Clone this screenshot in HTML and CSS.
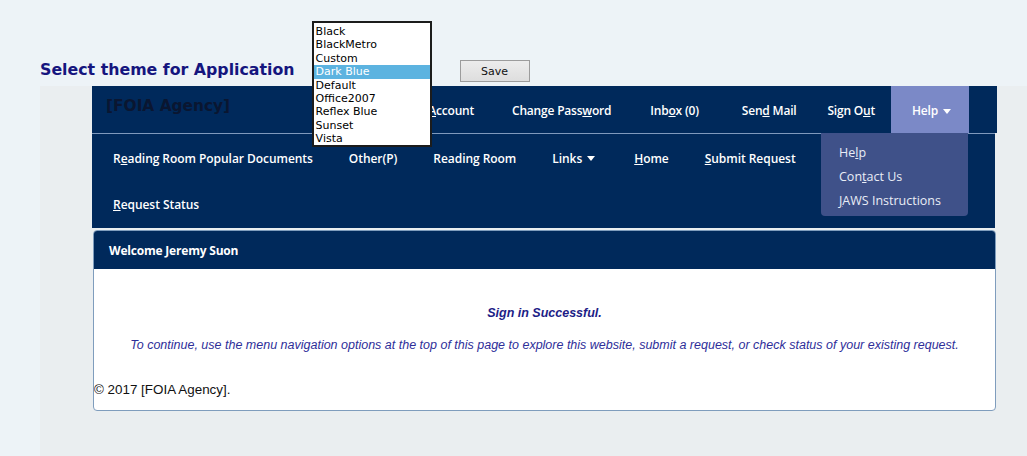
FILE: index.html
```html
<!DOCTYPE html>
<html lang="en">
<head>
<meta charset="utf-8">
<title>[FOIA Agency] - Home</title>
<link rel="stylesheet" href="styles.css">
</head>
<body>
  <div class="theme-bar">
    <h2 class="theme-title">Select theme for Application</h2>
    <div class="theme-picker">
      <ul class="theme-list" role="listbox" aria-label="Theme">
        <li>Black</li>
        <li>BlackMetro</li>
        <li>Custom</li>
        <li class="selected">Dark Blue</li>
        <li>Default</li>
        <li>Office2007</li>
        <li>Reflex Blue</li>
        <li>Sunset</li>
        <li>Vista</li>
      </ul>
    </div>
    <button class="save-btn" type="button">Save</button>
  </div>

  <div class="page">
    <div class="top-nav">
      <div class="brand">[FOIA Agency]</div>
      <ul class="top-links">
        <li><a href="#"><span>My <u>A</u>ccount</span></a></li>
        <li><a href="#"><span>Change Pass<u>w</u>ord</span></a></li>
        <li class="inbox"><a href="#"><span>Inb<u>o</u>x (0)</span></a></li>
        <li class="sendmail"><a href="#"><span>Sen<u>d</u> Mail</span></a></li>
        <li class="signout"><a href="#"><span>Sign O<u>u</u>t</span></a></li>
        <li class="help">
          <a href="#"><span>Help</span><svg class="caret" viewBox="0 0 8 5" width="8" height="5"><path d="M0 0h8L4 5z" fill="#fff"/></svg></a>
          <ul class="help-menu">
            <li><a href="#">He<u>l</u>p</a></li>
            <li><a href="#">Con<u>t</u>act Us</a></li>
            <li><a href="#"><u>J</u>AWS Instructions</a></li>
          </ul>
        </li>
      </ul>
    </div>

    <div class="main-nav">
      <ul class="main-links">
        <li><a href="#"><span>R<u>e</u>ading Room Popular Documents</span></a></li>
        <li><a href="#"><span>Other(P)</span></a></li>
        <li><a href="#"><span>Reading Room</span></a></li>
        <li class="links"><a href="#"><span>Links</span><svg class="caret" viewBox="0 0 8 5" width="8" height="5"><path d="M0 0h8L4 5z" fill="#fff"/></svg></a></li>
        <li><a href="#"><span><u>H</u>ome</span></a></li>
        <li><a href="#"><span><u>S</u>ubmit Request</span></a></li>
        <li><a href="#"><span><u>R</u>equest Status</span></a></li>
      </ul>
    </div>

    <div class="panel">
      <div class="panel-head">Welcome Jeremy Suon</div>
      <div class="panel-body">
        <p class="msg-title">Sign in Successful.</p>
        <p class="msg-text">To continue, use the menu navigation options at the top of this page to explore this website, submit a request, or check status of your existing request.</p>
        <p class="copyright">© 2017 [FOIA Agency].</p>
      </div>
    </div>
  </div>
</body>
</html>
```

FILE: styles.css
```css
* { box-sizing: border-box; }

html, body {
  margin: 0;
  padding: 0;
}

body {
  background: #edf3f7;
  font-family: "Open Sans", "Noto Sans", sans-serif;
  height: 456px;
  overflow: hidden;
}

ul { list-style: none; margin: 0; padding: 0; }
a { color: inherit; text-decoration: none; }

/* ---------- theme selector strip ---------- */
.theme-bar {
  height: 86px;
  display: flex;
  align-items: flex-end;
  padding-left: 40px;
}

.theme-title {
  margin: 0 17px 7px 0;
  font-family: "DejaVu Sans", Verdana, sans-serif;
  font-weight: bold;
  font-size: 15.8px;
  color: #15157e;
  white-space: nowrap;
}

.theme-picker {
  position: relative;
  width: 119px;
  align-self: stretch;
}

.theme-list {
  position: absolute;
  left: 0;
  top: 21px;
  width: 120px;
  height: 126px;
  padding: 2px 0 0 0;
  background: #fff;
  border: 2px solid #1c1c1c;
  font-family: "DejaVu Sans", Verdana, sans-serif;
  font-size: 11px;
  line-height: 13.4px;
  color: #000;
  z-index: 5;
}

.theme-list li {
  padding-left: 2px;
  white-space: nowrap;
}

.theme-list li.selected {
  background: #5cb3e0;
  color: #fff;
}

.save-btn {
  margin: 0 0 4px 29px;
  width: 70px;
  height: 22px;
  padding: 0;
  font-family: "DejaVu Sans", Verdana, sans-serif;
  font-size: 11px;
  color: #111;
  background: linear-gradient(#ececec, #dedede);
  border: 1px solid #9c9c9c;
  border-radius: 0;
}

/* ---------- page body ---------- */
.page {
  margin-left: 40px;
  background: #eaeef0;
  padding: 0 30px 0 52px;
  height: 370px;
}

.top-nav {
  height: 47px;
  background: #00295b;
  display: flex;
  align-items: stretch;
}

.brand {
  padding: 11px 0 0 14px;
  font-family: "DejaVu Sans", Verdana, sans-serif;
  font-weight: bold;
  font-size: 15.4px;
  color: #0a1631;
  white-space: nowrap;
}

.top-links {
  margin-left: auto;
  padding-right: 28px;
  display: flex;
  align-items: stretch;
}

.top-links > li {
  position: relative;
  display: flex;
}

.top-links > li > a {
  display: flex;
  align-items: center;
  padding: 2px 19px 0;
  font-size: 12px;
  font-weight: 600;
  color: #fff;
  letter-spacing: -0.2px;
  white-space: nowrap;
}

.top-links > li.inbox > a { padding: 2px 19px 0 20px; }
.top-links > li.sendmail > a { padding: 2px 12px 0 24px; }
.top-links > li.signout > a { padding: 2px 16px 0 19px; }

.top-links > li.help > a {
  background: #7b89c7;
  padding: 2px 18px 0 21px;
}

.caret {
  margin-left: 5px;
  margin-top: 1px;
}

.help-menu {
  position: absolute;
  top: 100%;
  right: 1px;
  width: 147px;
  padding: 8px 0 3px;
  background: #3f5189;
  border-radius: 0 0 4px 4px;
  z-index: 4;
}

.help-menu a {
  display: block;
  padding-left: 18px;
  line-height: 24px;
  font-size: 12.5px;
  color: #e9edf6;
  white-space: nowrap;
}

.main-nav {
  background: #00295b;
  border-top: 1px solid #7f99bd;
  padding: 1px 150px 1px 3px;
  margin-right: 2px;
}

.main-links {
  display: flex;
  flex-wrap: wrap;
}

.main-links a {
  display: flex;
  align-items: center;
  height: 46px;
  padding: 0 18px 0;
  font-size: 12px;
  font-weight: 600;
  color: #fff;
  letter-spacing: -0.05px;
  white-space: nowrap;
}

.main-links li.links a { padding-right: 21px; }

/* ---------- welcome panel ---------- */
.panel {
  margin: 2px 1px 0 1px;
  background: #fff;
  border: 1px solid #7f9dbd;
  border-radius: 4px;
  overflow: hidden;
}

.panel-head {
  height: 38px;
  background: #00295b;
  padding-left: 15px;
  display: flex;
  align-items: center;
  font-size: 12px;
  font-weight: 700;
  color: #fff;
  letter-spacing: -0.2px;
}

.panel-body {
  padding: 36px 0 12px;
  font-family: "Liberation Sans", Arial, sans-serif;
}

.panel-body p { margin: 0; }

.msg-title {
  text-align: center;
  font-weight: bold;
  font-style: italic;
  font-size: 12.5px;
  line-height: 16px;
  color: #1d1d86;
}

.msg-text {
  margin-top: 16px !important;
  text-align: center;
  font-style: italic;
  font-size: 12.5px;
  line-height: 16px;
  color: #2e2e99;
}

.copyright {
  margin-top: 29px !important;
  font-size: 13.4px;
  line-height: 16px;
  color: #111;
}
```
